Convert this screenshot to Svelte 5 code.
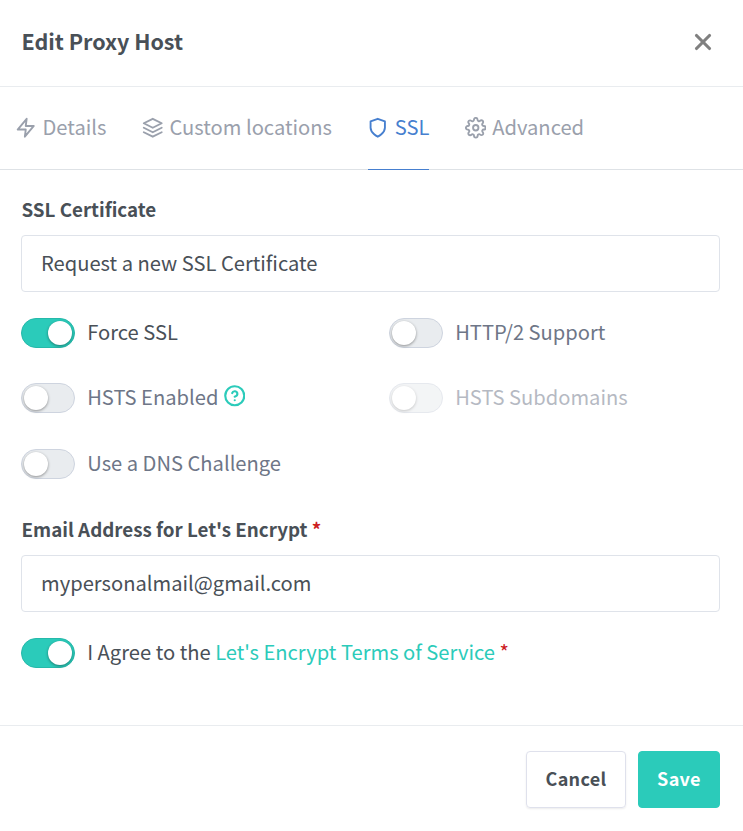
<script>
  let activeTab = $state('ssl');
  let email = $state('mypersonalmail@gmail.com');
  let agree = $state(true);

  const tabs = [
    { id: 'details', label: 'Details' },
    { id: 'locations', label: 'Custom locations' },
    { id: 'ssl', label: 'SSL' },
    { id: 'advanced', label: 'Advanced' }
  ];

  let switches = $state([
    { label: 'Force SSL', on: true },
    { label: 'HTTP/2 Support', on: false },
    { label: 'HSTS Enabled', on: false, help: true },
    { label: 'HSTS Subdomains', on: false, disabled: true },
    { label: 'Use a DNS Challenge', on: false }
  ]);
</script>

{#snippet icon(name)}
  <svg class="icon {name}" viewBox="0 0 24 24">
    {#if name === 'details'}
      <polygon points="13 2 3 14 12 14 11 22 21 10 12 10 13 2" />
    {:else if name === 'locations'}
      <polygon points="12 2 2 7 12 12 22 7 12 2" />
      <polyline points="2 17 12 22 22 17" />
      <polyline points="2 12 12 17 22 12" />
    {:else if name === 'ssl'}
      <path d="M12 22s8-4 8-10V5l-8-3-8 3v7c0 6 8 10 8 10z" />
    {:else if name === 'advanced'}
      <circle cx="12" cy="12" r="3" />
      <path d="M19.4 15a1.65 1.65 0 0 0 .33 1.82l.06.06a2 2 0 0 1 0 2.83 2 2 0 0 1-2.83 0l-.06-.06a1.65 1.65 0 0 0-1.82-.33 1.65 1.65 0 0 0-1 1.51V21a2 2 0 0 1-2 2 2 2 0 0 1-2-2v-.09A1.65 1.65 0 0 0 9 19.4a1.65 1.65 0 0 0-1.82.33l-.06.06a2 2 0 0 1-2.83 0 2 2 0 0 1 0-2.83l.06-.06a1.65 1.65 0 0 0 .33-1.82 1.65 1.65 0 0 0-1.51-1H3a2 2 0 0 1-2-2 2 2 0 0 1 2-2h.09A1.65 1.65 0 0 0 4.6 9a1.65 1.65 0 0 0-.33-1.82l-.06-.06a2 2 0 0 1 0-2.83 2 2 0 0 1 2.83 0l.06.06a1.65 1.65 0 0 0 1.82.33H9a1.65 1.65 0 0 0 1-1.51V3a2 2 0 0 1 2-2 2 2 0 0 1 2 2v.09a1.65 1.65 0 0 0 1 1.51 1.65 1.65 0 0 0 1.82-.33l.06-.06a2 2 0 0 1 2.83 0 2 2 0 0 1 0 2.83l-.06.06a1.65 1.65 0 0 0-.33 1.82V9a1.65 1.65 0 0 0 1.51 1H21a2 2 0 0 1 2 2 2 2 0 0 1-2 2h-.09a1.65 1.65 0 0 0-1.51 1z" />
    {:else if name === 'help'}
      <circle cx="12" cy="12" r="10.6" />
      <path d="M9.09 9a3 3 0 0 1 5.83 1c0 2-3 3-3 3" />
      <line x1="12" y1="17" x2="12" y2="17" />
    {:else if name === 'close'}
      <line x1="18" y1="6" x2="6" y2="18" />
      <line x1="6" y1="6" x2="18" y2="18" />
    {/if}
  </svg>
{/snippet}

<div class="modal">
  <header>
    <h5>Edit Proxy Host</h5>
    <button class="close" aria-label="Close">{@render icon('close')}</button>
  </header>

  <nav>
    {#each tabs as tab}
      <button class="tab" class:active={activeTab === tab.id} onclick={() => (activeTab = tab.id)}>
        {@render icon(tab.id)}<span>{tab.label}</span>
      </button>
    {/each}
  </nav>

  <main>
    <div class="label">SSL Certificate</div>
    <div class="field">Request a new SSL Certificate</div>

    <div class="switches">
      {#each switches as item}
        <label class="switch" class:disabled={item.disabled}>
          <input type="checkbox" bind:checked={item.on} disabled={item.disabled} />
          <span class="indicator"></span>
          <span class="description">{item.label}</span>
          {#if item.help}{@render icon('help')}{/if}
        </label>
      {/each}
    </div>

    <label class="label" for="email">Email Address for Let's Encrypt <span class="required">*</span></label>
    <input class="field" id="email" type="text" bind:value={email} />

    <label class="switch agree">
      <input type="checkbox" bind:checked={agree} />
      <span class="indicator"></span>
      <span class="description">I Agree to the <a href="#terms">Let's Encrypt Terms of Service</a> <span class="required">*</span></span>
    </label>
  </main>

  <footer>
    <button class="btn cancel">Cancel</button>
    <button class="btn save">Save</button>
  </footer>
</div>

<style>
  :global(body) {
    margin: 0;
    background: #fff;
  }

  .modal {
    height: 831px;
    display: flex;
    flex-direction: column;
    overflow: hidden;
    font-family: "Noto Sans CJK SC", "Noto Sans", sans-serif;
    font-size: 20.15px;
    line-height: 30px;
    color: #495057;
    white-space: nowrap;
  }

  .modal * {
    box-sizing: border-box;
  }

  button,
  input {
    font: inherit;
    color: inherit;
    margin: 0;
    padding: 0;
    border: 0;
    background: none;
  }

  .icon {
    flex: none;
    fill: none;
    stroke: currentColor;
    stroke-width: 2.1;
    stroke-linecap: round;
    stroke-linejoin: round;
    width: 21.5px;
    height: 21.5px;
  }

  header {
    flex: none;
    height: 87px;
    padding: 0 27px 3px 21.5px;
    display: flex;
    align-items: center;
    justify-content: space-between;
    border-bottom: 1px solid #e9ecef;
  }

  h5 {
    margin: 0;
    padding-bottom: 2px;
    font-size: 21.5px;
    font-weight: 700;
  }

  .close {
    display: flex;
    color: #808080;
  }

  .icon.close {
    width: 26px;
    height: 26px;
    stroke-width: 2.9;
  }

  nav {
    flex: none;
    height: 83px;
    padding-left: 15.5px;
    display: flex;
    gap: 36px;
    border-bottom: 1px solid #dee2e6;
  }

  .tab {
    height: 83px;
    display: flex;
    align-items: center;
    gap: 5.5px;
    color: #9aa0ac;
    border-bottom: 1px solid transparent;
  }

  .tab span {
    padding-bottom: 2px;
  }

  .icon.details {
    margin: 0 1px 0 -1px;
  }

  .icon.ssl,
  .icon.advanced {
    margin: 0 0.6px 0 -0.8px;
  }

  .tab.active {
    color: #467fcf;
    border-bottom-color: #467fcf;
  }

  main {
    flex: 1;
    padding: 25px 23px 0 21px;
  }

  .label {
    display: block;
    height: 30px;
    margin-bottom: 10px;
    padding-left: 0.5px;
    font-size: 18.78px;
    line-height: 28px;
    font-weight: 700;
  }

  .field {
    display: block;
    width: 100%;
    height: 57px;
    padding: 0 19px 2px;
    line-height: 53px;
    border: 1px solid #dfe3ea;
    border-radius: 4px;
  }

  .switches {
    display: grid;
    grid-template-columns: 368px 1fr;
    row-gap: 35.4px;
    margin: 26px 0 36.2px;
  }

  .switch {
    display: flex;
    align-items: center;
    height: 30px;
    color: #6e7687;
  }

  .switch input {
    appearance: none;
    width: 0;
    height: 0;
  }

  .indicator {
    flex: none;
    width: 54px;
    height: 30px;
    margin-right: 12.2px;
    padding: 2px;
    border: 1px solid #ced4df;
    border-radius: 15px;
    background: #e9ecef;
  }

  .indicator::before {
    content: "";
    display: block;
    width: 24px;
    height: 24px;
    border-radius: 50%;
    background: #fff;
    box-shadow: 0 1px 3px rgba(0, 0, 0, 0.4);
  }

  .description {
    padding-bottom: 2px;
  }

  input:checked + .indicator {
    background: #2bcbba;
    border-color: #26b9aa;
  }

  input:checked + .indicator::before {
    margin-left: 24px;
  }

  input:checked ~ .description {
    color: #495057;
  }

  .disabled {
    opacity: 0.5;
  }

  .icon.help {
    margin: -5px 0 0 5.5px;
    stroke-width: 2.4;
    color: #2bcbba;
  }

  .required {
    color: #cd201f;
  }

  .agree {
    margin-top: 26px;
  }

  a {
    color: #2bcbba;
    text-decoration: none;
  }

  footer {
    flex: none;
    height: 106px;
    padding: 25px 23px 0;
    display: flex;
    justify-content: flex-end;
    gap: 12px;
    border-top: 1px solid #e9ecef;
  }

  .btn {
    width: 100px;
    height: 57px;
    padding-bottom: 3px;
    font-size: 18px;
    font-weight: 700;
    letter-spacing: 0.3px;
    border: 1px solid #dfe1ec;
    border-radius: 4px;
  }

  .cancel {
    box-shadow: 0 1px 2px rgba(0, 0, 0, 0.08);
  }

  .save {
    width: 82px;
    color: #fff;
    background: #2bcbba;
    border-color: #2bcbba;
  }
</style>
